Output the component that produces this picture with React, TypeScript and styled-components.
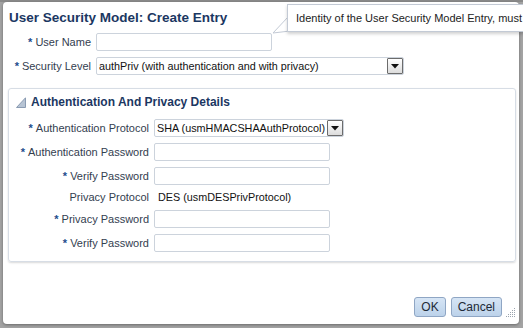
import React from "react";
import styled, { createGlobalStyle } from "styled-components";

const GlobalStyle = createGlobalStyle`
  html, body {
    margin: 0;
    padding: 0;
    background: #9d9d9d;
    font-family: "Liberation Sans", Arial, sans-serif;
    overflow: hidden;
  }
`;

const Page = styled.div`
  position: relative;
  width: 523px;
  height: 328px;
  padding: 2px 0 0 3px;
  box-sizing: border-box;
  background: linear-gradient(#8a8a8a 0 2px, #a3a3a3 2px);
`;

const Dialog = styled.div`
  width: 516px;
  height: 322px;
  box-sizing: border-box;
  background: #ffffff;
  border-radius: 4px;
  box-shadow: 0 1px 3px rgba(0, 0, 0, 0.35);
  display: flex;
  flex-direction: column;
  position: relative;
`;

const TitleBar = styled.div`
  height: 31px;
  display: flex;
  align-items: center;
  padding-left: 6px;
  font-size: 13.5px;
  font-weight: bold;
  color: #1b3762;
`;

interface GridProps {
  $labelWidth: number;
}

const FieldGrid = styled.div<GridProps>`
  display: grid;
  grid-template-columns: ${(p) => p.$labelWidth}px auto;
  column-gap: 5px;
  row-gap: 6px;
  align-items: center;
  justify-items: start;
`;

const Label = styled.label`
  justify-self: end;
  font-size: 11px;
  line-height: 13px;
  color: #33404f;
  white-space: nowrap;
`;

const Required = styled.span`
  color: #1d4d8d;
  font-weight: bold;
  margin-right: 3px;
`;

interface BoxProps {
  $width: number;
}

const TextInput = styled.div<BoxProps>`
  width: ${(p) => p.$width}px;
  height: 18px;
  box-sizing: border-box;
  border: 1px solid #ccd3dc;
  border-radius: 2px;
  background: #fff;
`;

const Select = styled.div<BoxProps>`
  width: ${(p) => p.$width}px;
  height: 18px;
  box-sizing: border-box;
  border: 1px solid #ccd3dc;
  border-radius: 2px;
  background: #fff;
  display: flex;
  align-items: center;
  padding-left: 2px;
  font-size: 10.8px;
  color: #111;
  white-space: nowrap;
`;

const SelectText = styled.span`
  flex: 1;
  overflow: hidden;
`;

const DropButton = styled.span`
  width: 16px;
  height: 16px;
  box-sizing: border-box;
  border: 1px solid #6c6c6c;
  border-radius: 1px;
  background: linear-gradient(#ffffff, #dcdcdc);
  display: flex;
  align-items: center;
  justify-content: center;
`;

const ReadValue = styled.span`
  font-size: 10.8px;
  line-height: 13px;
  padding-left: 4px;
  color: #111;
  white-space: nowrap;
`;

const Panel = styled.div`
  margin: 13px 3px 0 5px;
  border: 1px solid #d7dde5;
  border-radius: 3px;
  box-shadow: 0 1px 2px rgba(0, 0, 0, 0.15);
  padding-bottom: 9px;
`;

const PanelHeader = styled.div`
  height: 26px;
  display: flex;
  align-items: center;
  gap: 5px;
  padding-left: 7px;
  font-size: 12px;
  font-weight: bold;
  color: #1b3762;
`;

const PanelBody = styled.div`
  padding-top: 4px;
`;

const Footer = styled.div`
  margin-top: auto;
  display: flex;
  justify-content: flex-end;
  gap: 5px;
  padding: 0 17px 7px 0;
`;

const Button = styled.button`
  height: 20px;
  padding: 0 6px;
  font-family: "Liberation Sans", Arial, sans-serif;
  font-size: 12px;
  color: #1e2a38;
  border: 1px solid #8fa6c4;
  border-radius: 3px;
  background: linear-gradient(#d6e5f5, #bcd2ea);
`;

const Grip = styled.svg`
  position: absolute;
  right: 3px;
  bottom: 6px;
`;

const Tooltip = styled.div`
  position: absolute;
  left: 287px;
  top: 4px;
  width: 250px;
  height: 28px;
  box-sizing: border-box;
  background: #fff;
  border: 1px solid #c3cad5;
  box-shadow: 0 2px 3px rgba(0, 0, 0, 0.18);
  padding-left: 8px;
  display: flex;
  align-items: center;
  font-size: 11px;
  color: #222;
  white-space: nowrap;
`;

const Pointer = styled.svg`
  position: absolute;
  left: 271px;
  top: 15px;
`;

function Arrow() {
  return (
    <svg width="8" height="5" viewBox="0 0 8 5">
      <polygon points="0,0 8,0 4,4.5" fill="#111" />
    </svg>
  );
}

function Disclosure() {
  return (
    <svg width="10" height="11" viewBox="0 0 10 11">
      <polygon points="0.5,10.5 9.5,10.5 9.5,0.8" fill="#b7c4d4" stroke="#8a9bb2" strokeWidth="1" />
    </svg>
  );
}

function Field({ label, required, children }: { label: string; required?: boolean; children: React.ReactNode }) {
  return (
    <>
      <Label>
        {required && <Required>*</Required>}
        {label}
      </Label>
      {children}
    </>
  );
}

export default function App() {
  return (
    <>
      <GlobalStyle />
      <Page>
        <Dialog>
          <TitleBar>User Security Model: Create Entry</TitleBar>
          <FieldGrid $labelWidth={88}>
            <Field label="User Name" required>
              <TextInput $width={176} />
            </Field>
            <Field label="Security Level" required>
              <Select $width={308}>
                <SelectText>authPriv (with authentication and with privacy)</SelectText>
                <DropButton>
                  <Arrow />
                </DropButton>
              </Select>
            </Field>
          </FieldGrid>

          <Panel>
            <PanelHeader>
              <Disclosure />
              Authentication And Privacy Details
            </PanelHeader>
            <PanelBody>
              <FieldGrid $labelWidth={140}>
                <Field label="Authentication Protocol" required>
                  <Select $width={190}>
                    <SelectText>SHA (usmHMACSHAAuthProtocol)</SelectText>
                    <DropButton>
                      <Arrow />
                    </DropButton>
                  </Select>
                </Field>
                <Field label="Authentication Password" required>
                  <TextInput $width={176} />
                </Field>
                <Field label="Verify Password" required>
                  <TextInput $width={176} />
                </Field>
                <Field label="Privacy Protocol">
                  <ReadValue>DES (usmDESPrivProtocol)</ReadValue>
                </Field>
                <Field label="Privacy Password" required>
                  <TextInput $width={176} />
                </Field>
                <Field label="Verify Password" required>
                  <TextInput $width={176} />
                </Field>
              </FieldGrid>
            </PanelBody>
          </Panel>

          <Footer>
            <Button>OK</Button>
            <Button>Cancel</Button>
          </Footer>
          <Grip width="10" height="10" viewBox="0 0 10 10">
            {[
              [8, 0], [6, 2], [8, 2], [4, 4], [6, 4], [8, 4],
              [2, 6], [4, 6], [6, 6], [8, 6], [0, 8], [2, 8], [4, 8], [6, 8], [8, 8],
            ].map(([x, y]) => (
              <rect key={`${x}-${y}`} x={x} y={y} width="1" height="1" fill="#9aa3ad" />
            ))}
          </Grip>
        </Dialog>

        <Pointer width="20" height="20" viewBox="0 0 20 20">
          <polygon points="17,2 2,18 19,16" fill="#fff" stroke="#c3cad5" strokeWidth="1" />
        </Pointer>
        <Tooltip>Identity of the User Security Model Entry, must</Tooltip>
      </Page>
    </>
  );
}
